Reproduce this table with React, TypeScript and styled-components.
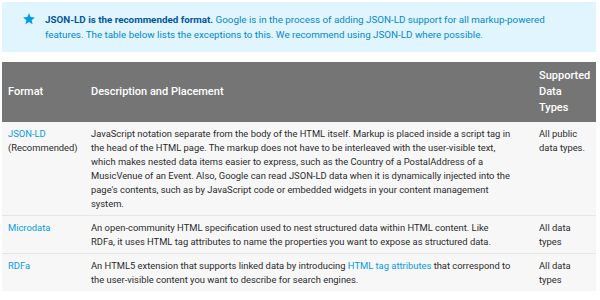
import React from "react";
import styled, { createGlobalStyle } from "styled-components";

const Global = createGlobalStyle`
  html, body { margin: 0; padding: 0; background: #fff; }
  body { font-family: Roboto, "Noto Sans", Arial, sans-serif; }
`;

const Page = styled.div`
  padding: 2px 4px 0 2px;
  width: 600px;
  box-sizing: border-box;
`;

const Callout = styled.div`
  display: flex;
  align-items: flex-start;
  background: #e1f5fe;
  padding: 10px 12px 10px 20px;
  gap: 9px;
  font-size: 9.8px;
  line-height: 15px;
  color: #0288d1;
`;

const StarIcon = styled.svg`
  flex: none;
  width: 14px;
  height: 14px;
  fill: #039be5;
`;

const CalloutText = styled.p`
  margin: 0;
  b {
    color: #01579b;
    font-weight: 700;
  }
`;

const Table = styled.table`
  margin-top: 10px;
  width: 594px;
  border-collapse: collapse;
  table-layout: fixed;
  font-size: 9.4px;
`;

const HeadCell = styled.th<{ $w?: number }>`
  box-sizing: border-box;
  background: #757575;
  color: #fff;
  text-align: left;
  font-weight: 500;
  font-size: 11px;
  line-height: 16px;
  padding: 6px 4px 6px 6px;
  vertical-align: middle;
  height: 60px;
  ${(p) => (p.$w ? `width: ${p.$w}px;` : "")}
`;

const Row = styled.tr`
  background: #f7f7f7;
  border-bottom: 1px solid #e6e6e6;
  &:last-child { border-bottom: none; }
`;

const Cell = styled.td`
  vertical-align: top;
  padding: 5px 4px 4px 6px;
  line-height: 14px;
  color: #2b2b2b;
`;

const Line = styled.span`
  display: block;
  white-space: nowrap;
`;

const Link = styled.a`
  color: #039be5;
  text-decoration: none;
`;

const rows = [
  {
    format: "JSON-LD",
    note: "(Recommended)",
    desc: [
      "JavaScript notation separate from the body of the HTML itself. Markup is placed inside a script tag in",
      "the head of the HTML page. The markup does not have to be interleaved with the user-visible text,",
      "which makes nested data items easier to express, such as the Country of a PostalAddress of a",
      "MusicVenue of an Event. Also, Google can read JSON-LD data when it is dynamically injected into the",
      "page's contents, such as by JavaScript code or embedded widgets in your content management",
      "system.",
    ],
    types: ["All public", "data types."],
  },
  {
    format: "Microdata",
    desc: [
      "An open-community HTML specification used to nest structured data within HTML content. Like",
      "RDFa, it uses HTML tag attributes to name the properties you want to expose as structured data.",
    ],
    types: ["All data", "types"],
  },
  {
    format: "RDFa",
    desc: [
      <>
        An HTML5 extension that supports linked data by introducing <Link href="#">HTML tag attributes</Link>{" "}
        that correspond to
      </>,
      "the user-visible content you want to describe for search engines.",
    ],
    types: ["All data", "types"],
  },
];

export default function App() {
  return (
    <Page>
      <Global />
      <Callout>
        <StarIcon viewBox="0 0 24 24">
          <path d="M12 17.27L18.18 21l-1.64-7.03L22 9.24l-7.19-.61L12 2 9.19 8.63 2 9.24l5.46 4.73L5.82 21z" />
        </StarIcon>
        <CalloutText>
          <Line>
            <b>JSON-LD is the recommended format.</b> Google is in the process of adding JSON-LD support for all
            markup-powered
          </Line>
          <Line>features. The table below lists the exceptions to this. We recommend using JSON-LD where possible.</Line>
        </CalloutText>
      </Callout>
      <Table>
        <thead>
          <tr>
            <HeadCell $w={83}>Format</HeadCell>
            <HeadCell>Description and Placement</HeadCell>
            <HeadCell $w={63}>
              Supported
              <br />
              Data
              <br />
              Types
            </HeadCell>
          </tr>
        </thead>
        <tbody>
          {rows.map((r) => (
            <Row key={r.format}>
              <Cell>
                <Link href="#">{r.format}</Link>
                {r.note && <Line>{r.note}</Line>}
              </Cell>
              <Cell>
                {r.desc.map((l, i) => (
                  <Line key={i}>{l}</Line>
                ))}
              </Cell>
              <Cell>
                {r.types.map((l, i) => (
                  <Line key={i}>{l}</Line>
                ))}
              </Cell>
            </Row>
          ))}
        </tbody>
      </Table>
    </Page>
  );
}
